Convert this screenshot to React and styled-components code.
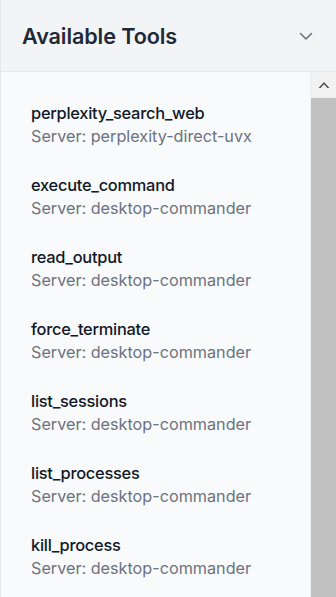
import React from "react";
import styled, { createGlobalStyle } from "styled-components";

const Global = createGlobalStyle`
  html, body { margin: 0; padding: 0; background: #ffffff; }
  body { font-family: Inter, "Noto Sans", sans-serif; }
  #root { height: 597px; }
`;

const Panel = styled.div`
  width: 336px;
  height: 597px;
  box-sizing: border-box;
  border-left: 1px solid #e5e7eb;
  display: flex;
  flex-direction: column;
  overflow: hidden;
`;

const Header = styled.div`
  height: 72px;
  flex: none;
  box-sizing: border-box;
  border-bottom: 1px solid #e5e7eb;
  background: #f3f4f6;
  display: flex;
  align-items: center;
  justify-content: space-between;
  padding: 0 22px 0 21px;
`;

const Title = styled.h2`
  margin: 0;
  font-size: 21.6px;
  font-weight: 600;
  color: #1f2937;
  letter-spacing: -0.1px;
`;

const Body = styled.div`
  flex: 1;
  display: flex;
  min-height: 0;
`;

const List = styled.ul`
  flex: 1;
  margin: 0;
  padding: 15px 0 0;
  list-style: none;
  background: #f9fafb;
  border-right: 1px solid #eef0f3;
`;

const Item = styled.li`
  padding: 14px 30px 13px;
`;

const Name = styled.div`
  font-size: 16.4px;
  line-height: 25px;
  font-weight: 500;
  letter-spacing: -0.25px;
  color: #111827;
`;

const Server = styled.div`
  font-size: 16.2px;
  line-height: 20px;
  color: #6b7280;
`;

const Scrollbar = styled.div`
  width: 25px;
  flex: none;
  display: flex;
  flex-direction: column;
  background: #f1f1f1;
`;

const ScrollButton = styled.div`
  height: 26px;
  display: flex;
  align-items: center;
  justify-content: center;
  background: #f1f1f1;
`;

const Thumb = styled.div`
  flex: 1;
  background: #c1c1c1;
`;

const tools = [
  ["perplexity_search_web", "perplexity-direct-uvx"],
  ["execute_command", "desktop-commander"],
  ["read_output", "desktop-commander"],
  ["force_terminate", "desktop-commander"],
  ["list_sessions", "desktop-commander"],
  ["list_processes", "desktop-commander"],
  ["kill_process", "desktop-commander"],
];

export default function App() {
  return (
    <>
      <Global />
      <Panel>
        <Header>
          <Title>Available Tools</Title>
          <svg width="16" height="16" viewBox="0 0 16 16" fill="none">
            <path d="M2.5 5.5 L8 11 L13.5 5.5" stroke="#6b7280" strokeWidth="1.6" strokeLinecap="round" strokeLinejoin="round" />
          </svg>
        </Header>
        <Body>
          <List>
            {tools.map(([n, s]) => (
              <Item key={n}>
                <Name>{n}</Name>
                <Server>Server: {s}</Server>
              </Item>
            ))}
          </List>
          <Scrollbar>
            <ScrollButton>
              <svg width="12" height="8" viewBox="0 0 12 8">
                <path d="M0.5 7 L6 1 L11.5 7 L9.4 7 L6 3.3 L2.6 7 Z" fill="#505050" />
              </svg>
            </ScrollButton>
            <Thumb />
          </Scrollbar>
        </Body>
      </Panel>
    </>
  );
}
